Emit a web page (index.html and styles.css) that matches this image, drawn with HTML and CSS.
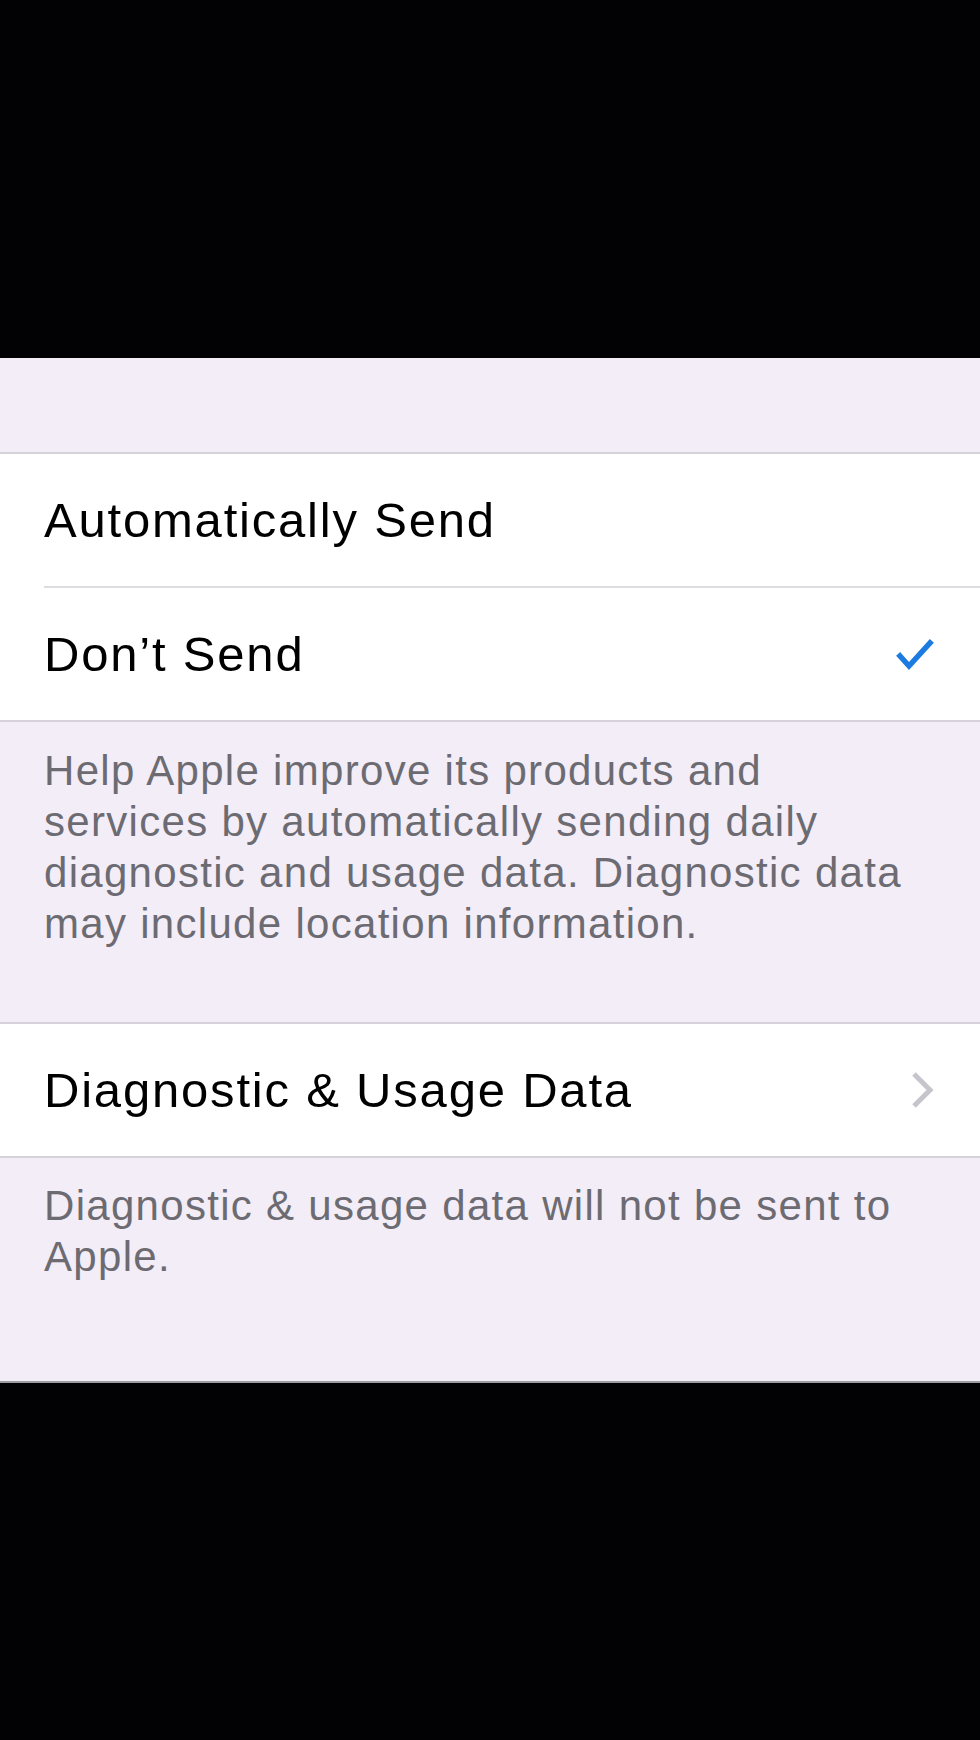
FILE: index.html
```html
<!DOCTYPE html>
<html lang="en">
<head>
    <meta charset="UTF-8">
    <meta name="viewport" content="width=device-width, initial-scale=1.0">
    <title>Diagnostics &amp; Usage</title>
    <link rel="stylesheet" href="styles.css">
</head>
<body>

<div class="top-bar"></div>

<div class="settings">
    <div class="group-gap"></div>

    <!-- Send options -->
    <div class="cell-group">
        <div class="cell">
            <span class="cell-label">Automatically Send</span>
        </div>
        <div class="cell">
            <span class="cell-label">Don’t Send</span>
            <svg class="check" width="40" height="34" viewBox="0 0 40 34">
                <polyline points="5,17 14,27 35,4" fill="none" stroke="#1b7be0" stroke-width="5.5" stroke-linecap="square"/>
            </svg>
        </div>
    </div>

    <p class="group-footer footer-send">Help Apple improve its products and services by automatically sending daily diagnostic and usage data. Diagnostic data may include location information.</p>

    <!-- Data link -->
    <div class="cell-group">
        <div class="cell">
            <span class="cell-label">Diagnostic &amp; Usage Data</span>
            <svg class="chevron" width="24" height="38" viewBox="0 0 24 38">
                <polyline points="3,3 19,19 3,35" fill="none" stroke="#c7c5cc" stroke-width="5"/>
            </svg>
        </div>
    </div>

    <p class="group-footer footer-data">Diagnostic &amp; usage data will not be sent to Apple.</p>
</div>

</body>
</html>
```

FILE: styles.css
```css
body {
    margin: 0;
    padding: 0;
    background-color: #020103;
    font-family: "Liberation Sans", Arial, sans-serif;
}
.top-bar {
    height: 358px;
    background-color: #020103;
}
.settings {
    background-color: #f3edf8;
    border-bottom: 2px solid #a09ca4;
}
.group-gap {
    height: 94px;
}
.cell-group {
    background-color: #fff;
    border-top: 2px solid #d6d2da;
    border-bottom: 2px solid #d6d2da;
}
.cell {
    height: 132px;
    display: flex;
    justify-content: space-between;
    align-items: center;
    margin-left: 44px;
    padding-right: 45px;
}
.cell + .cell {
    border-top: 2px solid #dedbe1;
}
.cell-label {
    font-size: 49px;
    letter-spacing: 1.8px;
    color: #000;
}
.check {
    margin-top: 4px;
}
.group-footer {
    margin: 0;
    padding: 0 44px;
    font-size: 42px;
    line-height: 51px;
    letter-spacing: 1.3px;
    color: #6d6b72;
}
.footer-send {
    padding-top: 23px;
    padding-bottom: 73px;
}
.footer-data {
    padding-top: 22px;
    padding-bottom: 99px;
}
```
